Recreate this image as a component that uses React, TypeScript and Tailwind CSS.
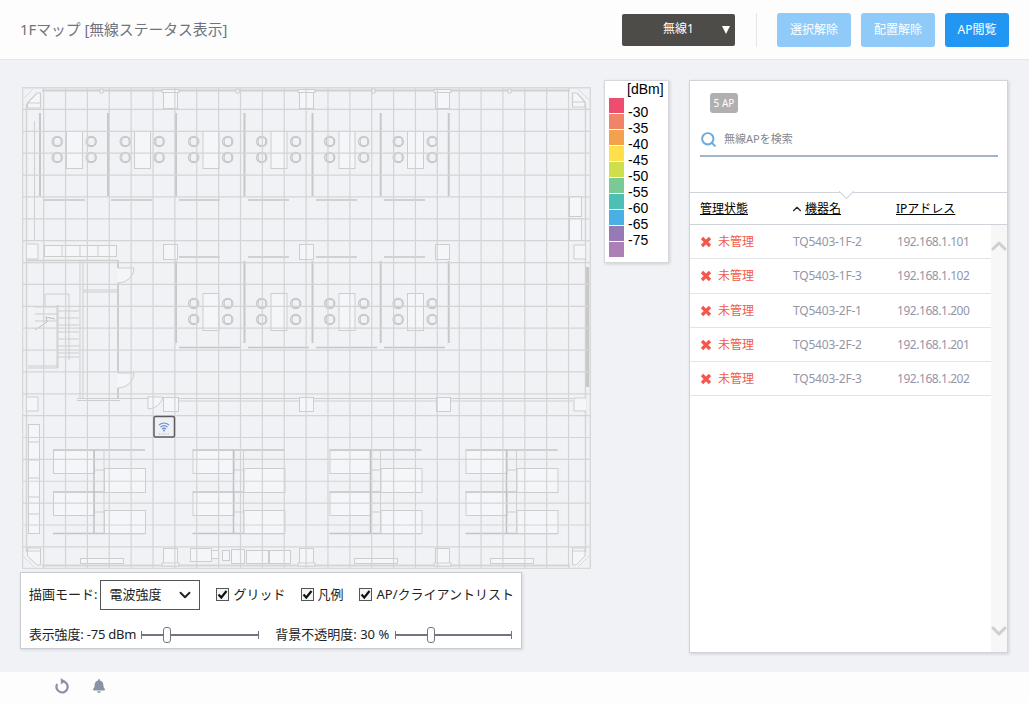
import React from "react";
import { FaBell } from "react-icons/fa";
import { ChevronDown, ChevronUp, Search } from "lucide-react";

const W = "#cdcdcd";
const L = "#dadada";
const F = "#f5f6f9";

function Box({ x, y, w, h, s = W, f = F }: { x: number; y: number; w: number; h: number; s?: string; f?: string }) {
  return <rect x={x + 0.5} y={y + 0.5} width={w} height={h} fill={f} stroke={s} strokeWidth="1" />;
}
function Ln({ a, b, c, d, s = W, t = 1 }: { a: number; b: number; c: number; d: number; s?: string; t?: number }) {
  return <line x1={a} y1={b} x2={c} y2={d} stroke={s} strokeWidth={t} />;
}
function Chair({ x, y }: { x: number; y: number }) {
  return (
    <g fill="none" stroke="#c6c6c6" strokeWidth="1.1">
      <circle cx={x + 5.2} cy={y + 5.5} r="5.2" />
      <rect x={x + 1.7} y={y + 1.5} width="7.5" height="8" rx="2.5" />
    </g>
  );
}
function Pod({ x, y }: { x: number; y: number }) {
  return (
    <g>
      <Box x={x} y={y} w={16} h={37} />
      <Chair x={x - 14} y={y + 5} />
      <Chair x={x - 14} y={y + 21} />
      <Chair x={x + 20} y={y + 5} />
      <Chair x={x + 20} y={y + 21} />
    </g>
  );
}
function DeskBlock({ x }: { x: number }) {
  return (
    <g>
      <Ln a={x} b={450} c={x + 92} d={450} s="#c4c4c4" t={1.5} />
      <Ln a={x} b={492} c={x + 92} d={492} s="#c4c4c4" t={1.5} />
      <Ln a={x} b={533.5} c={x + 92} d={533.5} s="#c4c4c4" t={1.5} />
      <Box x={x} y={450} w={41} h={23} />
      <Box x={x + 51} y={468} w={41} h={24} />
      <Box x={x} y={492} w={41} h={23} />
      <Box x={x + 51} y={510} w={41} h={23} />
      <Ln a={x + 41} b={450} c={x + 41} d={533} s="#c0c0c0" t={1.5} />
      <Ln a={x + 51} b={450} c={x + 51} d={533} s="#d0d0d0" />
      <Ln a={x + 41} b={470} c={x + 51} d={470} />
      <Ln a={x + 41} b={512} c={x + 51} d={512} />
    </g>
  );
}

function FloorPlan() {
  const vs = Array.from({ length: 27 }, (_, i) => 21.8 + i * 21.87);
  const hs = Array.from({ length: 23 }, (_, i) => 87.6 + i * 21.87);
  const topPods = [66, 134, 202.5, 270.5, 338.5, 407];
  const midPods = [202.5, 270.5, 338.5, 407];
  const steps = [307, 314, 321, 328, 335, 342, 349, 353];
  return (
    <svg width="569" height="482" viewBox="22 87 569 482" className="block shrink-0">
      <g fill="none">
        {/* outer walls */}
        <Ln a={42} b={90.5} c={570} d={90.5} s="#cfcfcf" t={2} />
        <Ln a={42} b={565.5} c={570} d={565.5} s="#d5d5d5" t={2} />
        <Ln a={26.5} b={104} c={26.5} d={552} s="#d5d5d5" t={1.5} />
        <Ln a={585.5} b={104} c={585.5} d={552} s="#d5d5d5" t={1.5} />
        <Ln a={587.5} b={267} c={587.5} d={387} s="#c8c8c8" t={3.5} />

        {/* corners */}
        <path d="M23 99 L33 89 M578 89 L589 100 M23 556 L34 567 M578 567 L589 556" stroke={L} />
        <path d="M27.5 103 L37 93 H40.5 V103 Z M27.5 103 V108 H40.5 V103" stroke={W} strokeWidth="1.2" fill={F} />
        <path d="M572.5 93 H577 L585 102 H572.5 Z M572.5 102 V107 H585 V102" stroke={W} strokeWidth="1.2" fill={F} />
        <path d="M27.5 548 H40.5 V565 H37 L27.5 556 Z M27.5 551 H40.5" stroke={W} fill={F} />
        <path d="M572.5 548 H585 V556 L576 565 H572.5 Z M572.5 551 H585" stroke={W} fill={F} />

        {/* top columns */}
        {[163, 299, 435].map((x) => (
          <g key={x}>
            <Box x={x} y={90} w={14} h={18} />
            <rect x={x - 1} y={89.5} width="17" height="3" fill={F} stroke={W} />
            <Box x={x} y={548} w={14} h={15} />
            <rect x={x - 1} y={563} width="17" height="3" fill={F} stroke={W} />
          </g>
        ))}
        {[101, 237, 373, 509].map((x) => (
          <rect key={x} x={x - 1} y={89} width="3" height="4" fill={F} stroke={W} />
        ))}

        {/* top office */}
        <Ln a={34.5} b={121} c={34.5} d={240} s="#d0d0d0" />
        {[40, 108, 176, 244.5, 312.5, 380.7, 448.7].map((x) => (
          <Ln key={x} a={x} b={113} c={x} d={196} s="#c8c8c8" t={2} />
        ))}
        {[44, 111, 179, 248, 316, 384].map((x) => (
          <Ln key={x} a={x} b={200} c={x + 41} d={200} s="#c6c6c6" t={1.5} />
        ))}
        {topPods.map((x) => (
          <Pod key={x} x={x} y={131} />
        ))}

        {/* cabinets on the right */}
        <Box x={569} y={196} w={12} h={20} />
        <Box x={569} y={218} w={12} h={22} />
        <path d="M585 245 H574 V259 H585" stroke={W} fill={F} />

        {/* middle band */}
        <path d="M27 244 H38 V259 H27" stroke={W} fill={F} />
        <Box x={163} y={244} w={14} h={15} />
        <Box x={299} y={244} w={14} h={15} />
        <Box x={435} y={244} w={14} h={15} />
        <Box x={44} y={245} w={72} h={11} />
        {[62, 80, 98].map((x) => (
          <Ln key={x} a={x} b={245} c={x} d={256} />
        ))}
        <Ln a={27} b={260.5} c={118} d={260.5} s="#cfcfcf" t={1.5} />
        {[179, 248, 316, 384].map((x) => (
          <Ln key={x} a={x} b={257} c={x + 41} d={257} s="#c6c6c6" t={1.5} />
        ))}
        {[176, 244.5, 312.5, 380.7, 448.7].map((x) => (
          <Ln key={x} a={x} b={261} c={x} d={343} s="#c8c8c8" t={2} />
        ))}
        {[179, 248, 316, 384].map((x) => (
          <Ln key={x} a={x} b={347.5} c={x + 61} d={347.5} s="#c6c6c6" t={1.5} />
        ))}
        {midPods.map((x) => (
          <Pod key={x} x={x} y={293} />
        ))}

        {/* lift and doors */}
        <Ln a={80} b={260} c={80} d={398} />
        <Ln a={83} b={260} c={83} d={398} />
        <Ln a={118} b={260} c={118} d={268} t={2} />
        <Ln a={118} b={283} c={118} d={373} t={2} />
        <Ln a={118} b={388} c={118} d={398} t={2} />
        <Ln a={83} b={290} c={117} d={290} t={1} />
        <Ln a={83} b={292} c={117} d={292} t={1} />
        <path d="M118 268 H134 A16 15 0 0 1 118 283" stroke={W} fill={F} />
        <path d="M118 373 H134 A16 15 0 0 1 118 388" stroke={W} fill={F} />
        <path d="M148 396 V409 A16 15 0 0 0 163 397 H148" stroke={W} fill={F} />
        <path d="M77 398.5 H148 M77 400.5 H120" stroke={W} />
        <path d="M178 398.5 H573 M178 401 H573" stroke="#cfcfcf" />
        <Box x={163} y={397} w={15} h={14} />
        <Box x={299} y={397} w={14} h={14} />
        <Box x={436} y={397} w={14} h={14} />
        <path d="M586 398 H574 V411 H586" fill={F} stroke={W} />
        <path d="M27 397 H38 V411 H27" fill={F} stroke={W} />

        {/* stairs */}
        <path d="M45 307 V294 H69 V360" stroke={W} />
        <path d="M57 305 V368 H28 M58 305 V368" stroke={W} />
        <Ln a={28} b={366} c={57} d={366} />
        {steps.map((y) => (
          <g key={y}>
            <Ln a={35} b={y} c={57} d={y} s={y > 325 ? "transparent" : W} />
            <Ln a={58} b={y + 4} c={79} d={y + 4} />
          </g>
        ))}
        <path d="M35 330 L47 322 L46 317 L55 319" stroke="#bdbdbd" />

        {/* left shelves */}
        <Box x={28} y={424} w={11} h={109} />
        {[442, 460, 478, 497, 514].map((y) => (
          <Ln key={y} a={28} b={y} c={39} d={y} />
        ))}

        {/* desks */}
        {[53, 192.5, 329.5, 465.5].map((x) => (
          <DeskBlock key={x} x={x} />
        ))}

        {/* bottom fittings */}
        {[80, 354, 490].map((x) => (
          <Box key={x} x={x} y={558} w={43} h={5} />
        ))}
        <Box x={190} y={548} w={21} h={13} />
        <Box x={211} y={550} w={7} h={8} />
        <Box x={222} y={550} w={7} h={10} />
        <Box x={231} y={549} w={13} h={14} />
        <Box x={246} y={550} w={22} h={13} />
        <Box x={269} y={550} w={21} h={13} />
      </g>

      {/* grid */}
      <g>
        {vs.map((x) => (
          <line key={x} x1={x} y1={87} x2={x} y2={568.6} stroke="#d4d4d4" strokeWidth="1.2" />
        ))}
        {hs.map((y) => (
          <line key={y} x1={22} y1={y} x2={590} y2={y} stroke="#d4d4d4" strokeWidth="1.2" />
        ))}
        <rect x="22.5" y="87.5" width="568" height="481" fill="none" stroke="#d8d8d8" strokeWidth="1.5" />
      </g>

      {/* AP */}
      <g>
        <rect x="154" y="416.5" width="20.5" height="20.5" rx="1.5" fill="#eef0f4" stroke="#5c5c5c" strokeWidth="1.5" />
        <g fill="none" stroke="#6a8bd0" strokeWidth="1.2">
          <path d="M159 425 Q164 421 169 425" />
          <path d="M160.5 427 Q164 424.2 167.5 427" />
          <path d="M162 429 Q164 427.2 166 429" />
        </g>
        <circle cx="164" cy="430.5" r="1" fill="#6a8bd0" />
        <path d="M159 434 H169" stroke="#b6b9c2" strokeDasharray="1 1.2" />
      </g>
    </svg>
  );
}

function Check({ label, className, labelClass = "ml-[4px]" }: { label: string; className: string; labelClass?: string }) {
  return (
    <div className={`flex items-center ${className}`}>
      <span className="flex h-[13px] w-[13px] items-center justify-center border border-[#555] bg-[#f5f5f5]">
        <svg width="11" height="11" viewBox="0 0 11 11" fill="none">
          <path d="M1.5 5.5 L4.3 8.5 L9.5 2" stroke="#111" strokeWidth="2.2" />
        </svg>
      </span>
      <span className={`whitespace-nowrap ${labelClass}`}>{label}</span>
    </div>
  );
}

function Slider({ width, thumb }: { width: string; thumb: string }) {
  return (
    <div className={`relative h-[16px] ${width}`}>
      <div className="absolute left-0 right-0 top-[7px] h-[2px] bg-[#70757f]" />
      <div className="absolute left-0 top-[4px] h-[8px] w-px bg-[#70757f]" />
      <div className="absolute right-0 top-[4px] h-[8px] w-px bg-[#70757f]" />
      <div className={`absolute top-0 h-[16px] w-[8px] rounded-[3px] border border-[#70757f] bg-white ${thumb}`} />
    </div>
  );
}

const legend = ["#ef4d70", "#f08468", "#f4a14f", "#ffe04a", "#cddf4b", "#7bca96", "#4dc0b5", "#4aafe3", "#957ab5", "#ac7fb7"];
const legendLabels = ["-30", "-35", "-40", "-45", "-50", "-55", "-60", "-65", "-75"];
const rows = [
  ["TQ5403-1F-2", "192.168.1.101"],
  ["TQ5403-1F-3", "192.168.1.102"],
  ["TQ5403-2F-1", "192.168.1.200"],
  ["TQ5403-2F-2", "192.168.1.201"],
  ["TQ5403-2F-3", "192.168.1.202"],
];

export default function App() {
  return (
    <div className="flex h-[703px] w-[1029px] flex-col overflow-hidden bg-[#f0f2f6] font-['Noto_Sans','Noto_Sans_CJK_JP',sans-serif]">
      <header className="flex h-[60px] shrink-0 items-center border-b border-[#e4e6ea] bg-[#fdfdfd] pl-[20px]">
        <h1 className="-mt-[1px] w-[602px] text-[14.8px] font-normal text-[#6f7480]">1Fマップ [無線ステータス表示]</h1>
        <div className="relative flex h-[32px] w-[113px] items-center justify-center rounded-[2px] bg-[#4e4c49] pb-[1px] text-[12px] text-white">
          無線1
          <span className="absolute right-[5px] top-[12px] h-0 w-0 border-x-[4px] border-t-[8px] border-x-transparent border-t-white" />
        </div>
        <div className="ml-[21px] h-[34px] w-px bg-[#e2e6ea]" />
        <button className="ml-[20px] h-[34px] w-[74px] rounded-[3px] bg-[#90caf9] text-[12px] text-white">選択解除</button>
        <button className="ml-[10px] h-[34px] w-[74px] rounded-[3px] bg-[#90caf9] text-[12px] text-white">配置解除</button>
        <button className="ml-[10px] h-[34px] w-[64px] rounded-[3px] bg-[#2196f3] text-[12px] text-white">AP閲覧</button>
      </header>

      <main className="flex min-h-0 flex-1 pl-[20px]">
        <div className="w-[502px] shrink-0 pt-[27px]">
          <div className="ml-[2px]">
            <FloorPlan />
          </div>
          <div className="mt-[3px] h-[77px] w-[502px] border border-[#c9ccd2] bg-white text-[13px] text-[#222] shadow-[1px_1px_3px_rgba(0,0,0,0.12)]">
            <div className="flex h-[43px] items-center pl-[8px]">
              <span className="whitespace-nowrap">描画モード:</span>
              <div className="ml-[3px] flex h-[30px] w-[100px] items-center justify-between border border-[#555] pl-[8px] pr-[5px]">
                <span>電波強度</span>
                <ChevronDown size={18} strokeWidth={2.5} color="#222" />
              </div>
              <Check label="グリッド" className="ml-[16px]" />
              <Check label="凡例" className="ml-[15px]" />
              <Check label="AP/クライアントリスト" className="ml-[15px]" labelClass="ml-[5px]" />
            </div>
            <div className="mt-[11px] flex h-[16px] items-center pl-[8px]">
              <span className="whitespace-nowrap tracking-[-0.2px]">表示強度: -75 dBm</span>
              <Slider width="ml-[5px] w-[118px]" thumb="left-[22px]" />
              <span className="ml-[16px] whitespace-nowrap">背景不透明度: 30 %</span>
              <Slider width="ml-[6px] w-[117px]" thumb="left-[32px]" />
            </div>
          </div>
        </div>

        <div className="ml-[82px] mt-[20px] h-[183px] w-[65px] shrink-0 border border-[#d5d7dc] bg-white pl-[4px] font-['Liberation_Sans',sans-serif] text-[14px] leading-[16px] text-black shadow-[1px_1px_3px_rgba(0,0,0,0.15)]">
          <div className="flex">
            <div className="mt-[17px] flex w-[15px] flex-col gap-px">
              {legend.map((c) => (
                <div key={c} className="h-[15px] w-[15px]" style={{ backgroundColor: c }} />
              ))}
            </div>
            <div className="ml-[4px] mt-[1px]">
              <div className="-ml-[1px] mb-[7px] h-[15px] whitespace-nowrap text-[14px] leading-[15px]">[dBm]</div>
              {legendLabels.map((l) => (
                <div key={l} className="h-[16px]">{l}</div>
              ))}
            </div>
          </div>
        </div>

        <aside className="ml-[20px] mt-[20px] flex h-[573px] w-[319px] shrink-0 flex-col border border-[#d0d3d8] bg-white shadow-[1px_1px_3px_rgba(0,0,0,0.15)]">
          <div className="h-[111px] shrink-0">
            <div className="ml-[20px] mt-[12px] flex h-[20px] w-[28px] items-center justify-center rounded-[3px] bg-[#b0b0b0] text-[10px] text-white">5 AP</div>
            <div className="ml-[10px] mr-[9px] mt-[17px] flex h-[27px] items-center border-b-2 border-[#a2b5c6] pb-[6px]">
              <Search size={17} strokeWidth={2.8} color="#6ea8dc" />
              <span className="ml-[7px] text-[11px] text-[#85888f]">無線APを検索</span>
            </div>
          </div>
          <div className="relative flex h-[33px] shrink-0 items-center border-y border-[#cdd3d8] text-[12px] text-black">
            <span className="absolute left-[151px] top-[-7px] h-[11px] w-[11px] rotate-45 border-b border-r border-[#cdd3d8] bg-white" />
            <span className="ml-[10px] w-[93px] shrink-0 underline">管理状態</span>
            <ChevronUp size={14} strokeWidth={2} color="#222" className="-ml-[3.5px] shrink-0" />
            <span className="ml-[1.5px] w-[91px] shrink-0 underline">機器名</span>
            <span className="underline">IPアドレス</span>
          </div>
          <div className="flex min-h-0 flex-1">
            <div className="w-[301px] shrink-0">
              {rows.map(([name, ip]) => (
                <div key={name} className="flex h-[34.25px] items-center border-b border-[#e1e5e8] pt-[1px] text-[12px]">
                  <svg width="12" height="12" viewBox="0 0 12 12" className="ml-[10px] shrink-0">
                    <path d="M2 2 L10 10 M10 2 L2 10" stroke="#f4574a" strokeWidth="3.2" />
                  </svg>
                  <span className="ml-[6px] w-[75px] shrink-0 text-[#f25a4a]">未管理</span>
                  <span className="w-[104px] shrink-0 tracking-[-0.2px] text-[#9396a6]">{name}</span>
                  <span className="tracking-[-0.45px] text-[#9396a6]">{ip}</span>
                </div>
              ))}
            </div>
            <div className="flex w-[16px] shrink-0 flex-col items-center justify-between bg-[#f7f7f7] py-[9px]">
              <ChevronUp size={24} strokeWidth={3} color="#cfcfcf" className="-mx-[4px] shrink-0" />
              <ChevronDown size={24} strokeWidth={3} color="#cfcfcf" className="-mx-[4px] shrink-0" />
            </div>
          </div>
        </aside>
      </main>

      <footer className="flex h-[31px] shrink-0 items-center bg-[#fdfdfd] pb-[3px] pl-[54px]">
        <svg width="16" height="16" viewBox="0 0 16 16" fill="none">
          <path d="M8.3 3.2 A5.6 5.6 0 1 1 3.2 6" stroke="#8a93a6" strokeWidth="2.3" />
          <path d="M6.8 0 L11.4 3.2 L6.8 6.4 Z" fill="#8a93a6" />
        </svg>
        <FaBell size={14} color="#8a93a6" className="ml-[22px]" />
      </footer>
    </div>
  );
}
